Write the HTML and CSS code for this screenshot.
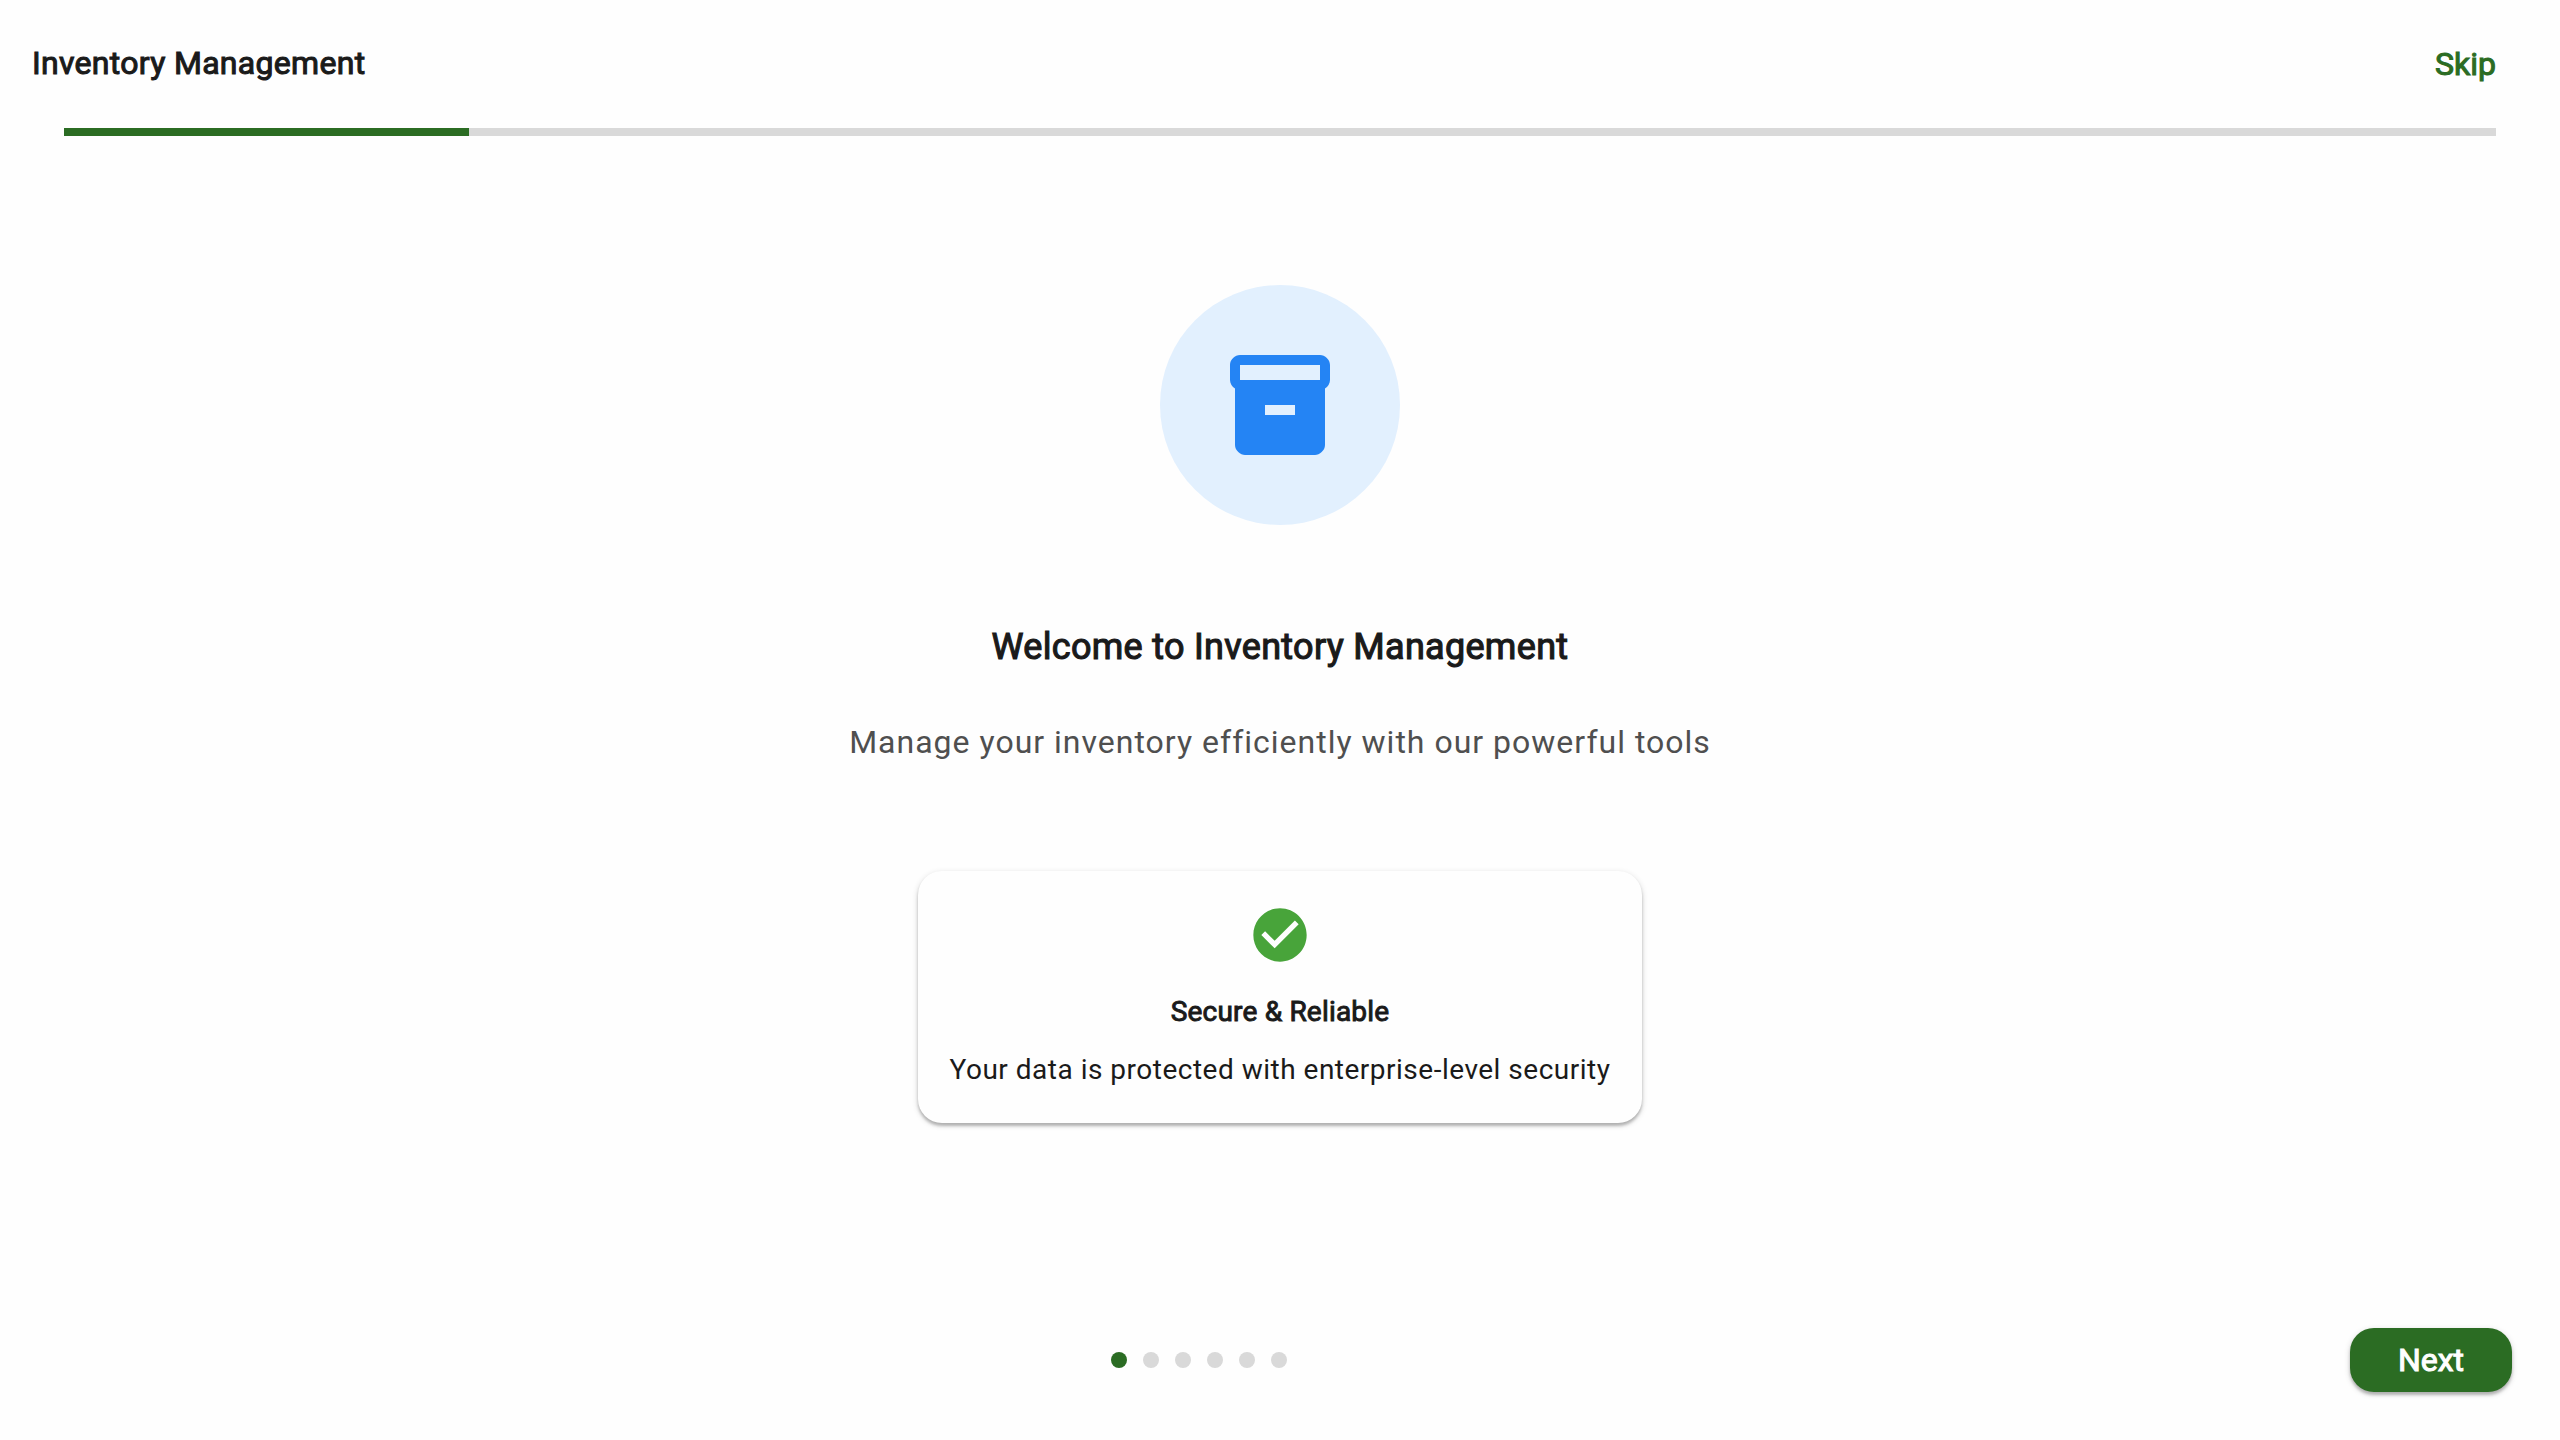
FILE: index.html
```html
<!DOCTYPE html>
<html lang="en">
<head>
<meta charset="utf-8">
<title>Inventory Management</title>
<link rel="stylesheet" href="styles.css">
</head>
<body>
<div class="page">
  <header class="topbar">
    <h1 class="topbar-title">Inventory Management</h1>
    <button class="skip">Skip</button>
  </header>
  <div class="progress"><div class="progress-fill"></div></div>
  <main class="content">
    <div class="hero">
      <svg class="hero-icon" viewBox="0 0 24 24"><path d="M20 2H4c-1 0-2 .9-2 2v3.01c0 .72.43 1.34 1 1.69V20c0 1.1 1.1 2 2 2h14c.9 0 2-.9 2-2V8.7c.57-.35 1-.97 1-1.69V4c0-1.100-1-2-2-2zm-5 12H9v-2h6v2zm5-7H4V4h16v3z"/></svg>
    </div>
    <h2 class="heading">Welcome to Inventory Management</h2>
    <p class="subtitle">Manage your inventory efficiently with our powerful tools</p>
    <section class="card">
      <svg class="card-icon" viewBox="0 0 24 24"><path d="M12 2C6.480 2 2 6.480 2 12s4.480 10 10 10 10-4.480 10-10S17.520 2 12 2zm-2 15l-5-5 1.410-1.410L10 14.170l7.590-7.590L19 8l-9 9z"/></svg>
      <h3 class="card-title">Secure &amp; Reliable</h3>
      <p class="card-text">Your data is protected with enterprise-level security</p>
    </section>
  </main>
  <footer class="footer">
    <div class="dots">
      <span class="dot dot-active"></span><span class="dot"></span><span class="dot"></span><span class="dot"></span><span class="dot"></span><span class="dot"></span>
    </div>
    <button class="next">Next</button>
  </footer>
</div>
</body>
</html>
```
FILE: styles.css
```css
* { box-sizing: border-box; }
body, h1, h2, h3, p { margin: 0; font-weight: 400; }
body {
  background: #fefefe;
  color: #1a1a1a;
  font-family: Roboto, sans-serif;
}
button { border: 0; padding: 0; background: none; font: inherit; }
.page {
  display: flex;
  flex-direction: column;
  width: 2560px;
  height: 1440px;
  overflow: hidden;
}
.topbar {
  display: flex;
  justify-content: space-between;
  height: 128px;
  padding: 0 64px 0 32px;
}
.topbar-title {
  font-size: 32px;
  line-height: 40px;
  letter-spacing: .3px;
  margin-top: 43px;
  -webkit-text-stroke: 1.05px;
}
.skip {
  align-self: flex-start;
  font-size: 32px;
  line-height: 40px;
  margin-top: 44px;
  color: #2b6c23;
  -webkit-text-stroke: 1.05px;
}
.progress {
  height: 8px;
  margin: 0 64px;
  background: #d9d9d9;
}
.progress-fill {
  width: calc(100% / 6);
  height: 8px;
  background: #2b6c23;
}
.content {
  flex: 1;
  display: flex;
  flex-direction: column;
  align-items: center;
  padding-top: 149px;
}
.hero {
  display: grid;
  place-items: center;
  width: 240px;
  height: 240px;
  border-radius: 50%;
  background: #e2f0fe;
}
.hero-icon { width: 120px; height: 120px; fill: #2484f4; }
.heading {
  margin-top: 97px;
  font-size: 36px;
  line-height: 50px;
  letter-spacing: .3px;
  -webkit-text-stroke: 1.13px;
}
.subtitle {
  margin-top: 46px;
  font-size: 32px;
  line-height: 48px;
  letter-spacing: 1px;
  color: #4f4f4f;
}
.card {
  display: flex;
  flex-direction: column;
  align-items: center;
  width: 724px;
  height: 252px;
  margin-top: 105px;
  padding-top: 32px;
  border-radius: 24px;
  background: #fefefe;
  box-shadow: 0 3px 3px rgba(0,0,0,.22), 0 2px 6px rgba(0,0,0,.16);
}
.card-icon { width: 64px; height: 64px; fill: #48a43a; }
.card-title {
  margin-top: 25px;
  font-size: 28px;
  line-height: 40px;
  letter-spacing: .2px;
  -webkit-text-stroke: .95px;
}
.card-text {
  margin-top: 18px;
  font-size: 28px;
  line-height: 40px;
  letter-spacing: .5px;
}
.footer {
  display: flex;
  justify-content: space-between;
  align-items: center;
  height: 64px;
  margin-bottom: 48px;
  padding: 0 48px 0 1111px;
}
.dots { display: flex; gap: 16px; }
.dot { width: 16px; height: 16px; border-radius: 50%; background: #d9d9d9; }
.dot-active { background: #2b6c23; }
.next {
  width: 162px;
  height: 64px;
  border-radius: 24px;
  background: #2b6c23;
  color: #fefefe;
  font-size: 32px;
  -webkit-text-stroke: 1.05px;
  box-shadow: 0 3px 3px rgba(0,0,0,.22), 0 2px 6px rgba(0,0,0,.16);
}
```
